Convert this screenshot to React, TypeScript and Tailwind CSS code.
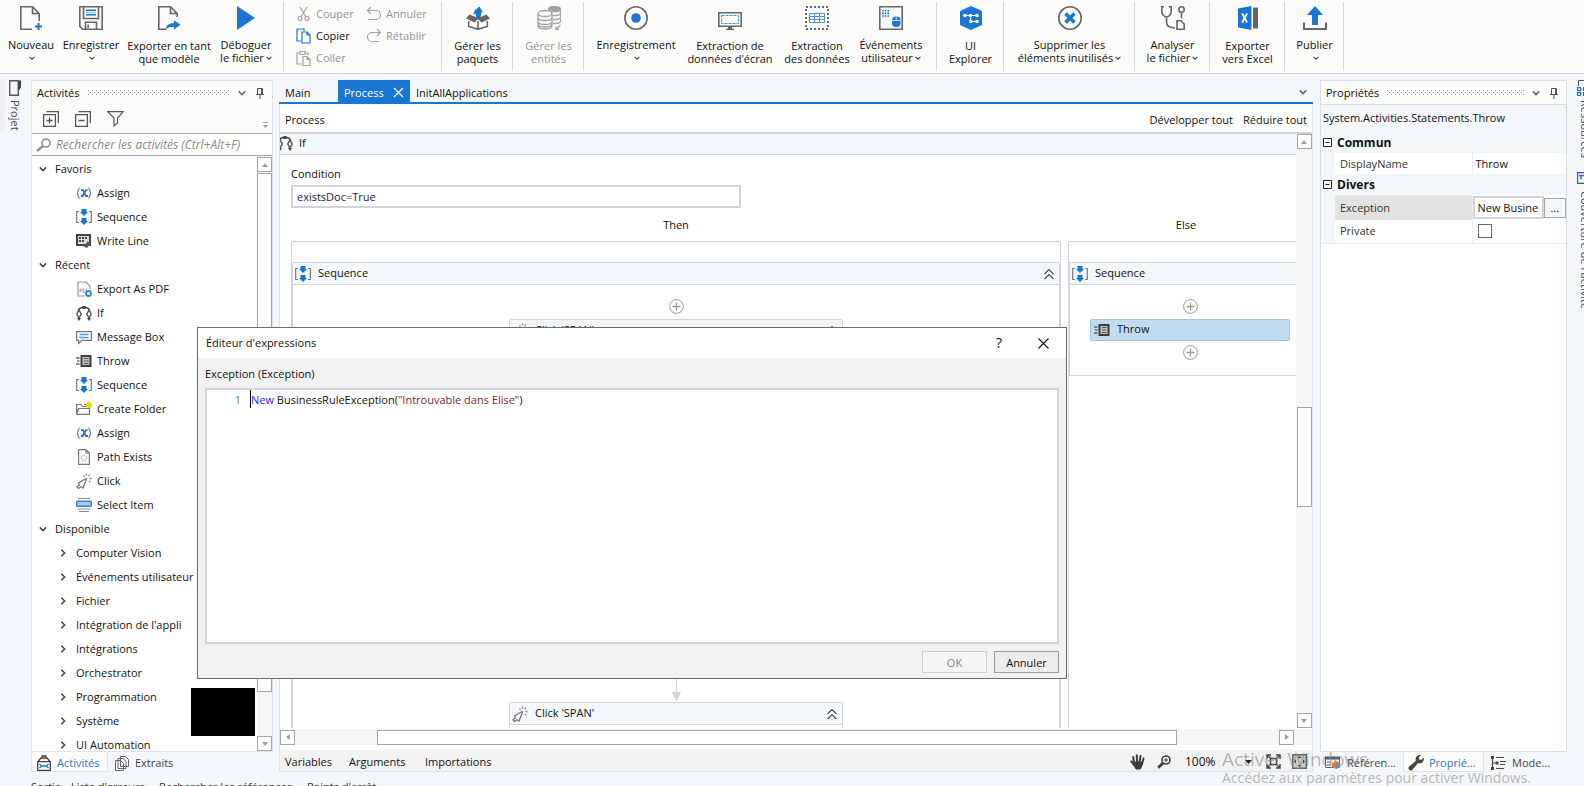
import type { ReactNode } from 'react';

const GRAY = '#666666';
const BLUE = '#1976d2';

/* ---------- small shared glyphs ---------- */

function Chevron({ className = '', dir = 'down', size = 8, color = '#444', stroke = 1.5 }: { className?: string; dir?: 'down' | 'right'; size?: number; color?: string; stroke?: number }) {
  return (
    <svg className={className} width={size} height={size} viewBox="0 0 8 8" fill="none" stroke={color} strokeWidth={stroke} aria-hidden="true">
      <path d={dir === 'down' ? 'M0.8 2.4 4 5.6 7.2 2.4' : 'M2.4 0.8 5.6 4 2.4 7.2'} />
    </svg>
  );
}

function DoubleChevron() {
  return (
    <svg width="12" height="12" viewBox="0 0 12 12" fill="none" stroke="#4a4a55" strokeWidth="1.2" aria-hidden="true">
      <path d="M1.5 6 6 1.5 10.5 6M1.5 11 6 6.500 10.5 11" />
    </svg>
  );
}

function Pin() {
  return (
    <svg width="10" height="12" viewBox="0 0 10 12" fill="none" stroke="#555" aria-hidden="true">
      <path d="M2.500 7V1.500h5V7M1 7.500h8M5 8v4M6.500 1.500V7" />
    </svg>
  );
}

function Grip({ id }: { id: string }) {
  return (
    <svg className="h-[5px] min-w-0 flex-1" aria-hidden="true" shapeRendering="crispEdges">
      <defs>
        <pattern id={id} width="4" height="4" patternUnits="userSpaceOnUse">
          <rect width="1" height="1" fill="#9c9c9c" />
          <rect x="2" y="2" width="1" height="1" fill="#9c9c9c" />
        </pattern>
      </defs>
      <rect width="100%" height="5" fill={`url(#${id})`} />
    </svg>
  );
}

function Plus() {
  return (
    <button type="button" aria-label="Ajouter une activité" className="block h-[15px] w-[15px]">
      <svg width="15" height="15" viewBox="0 0 15 15" fill="none" stroke="#999" aria-hidden="true">
        <circle cx="7.5" cy="7.5" r="6.900" />
        <path d="M7.500 3.500v8M3.500 7.500h8" strokeWidth="1.300" />
      </svg>
    </button>
  );
}

function ScrollButton({ dir }: { dir: 'up' | 'down' | 'left' | 'right' }) {
  const paths = { up: 'M1 6h6L4 2z', down: 'M1 2h6L4 6z', left: 'M6 1v6L2 4z', right: 'M2 1v6l4-3z' };
  return (
    <button type="button" aria-label={`Défiler ${dir}`} className="flex h-[15px] w-[15px] shrink-0 items-center justify-center border border-[#a6a6a6] bg-white">
      <svg width="8" height="8" viewBox="0 0 8 8" fill="#a0a0a0" aria-hidden="true"><path d={paths[dir]} /></svg>
    </button>
  );
}

/* ---------- ribbon icons, 24x24 ---------- */

function RibbonSvg({ children }: { children: ReactNode }) {
  return <svg width="24" height="24" viewBox="0 0 24 24" fill="none" stroke={GRAY} strokeWidth="1.600" aria-hidden="true">{children}</svg>;
}

const ribbonIcons = {
  new: (
    <RibbonSvg>
      <path d="M13 23.200H1.800V.800H13.500L20.200 7.500V15M13.500 1V7.500H20" />
      <path d="M19.500 17v7M16 20.500h7" stroke={BLUE} strokeWidth="2" />
    </RibbonSvg>
  ),
  save: (
    <RibbonSvg>
      <path d="M.800.800H23.200V23.200H3.500L.800 20.500ZM4.500 1V12.500H19.500V1M6.500 23V16.200H17.500V23M9.200 18.500V22" />
      <path d="M7 4.200h10M7 8.800h10" stroke={BLUE} />
      <path d="M7 6.500h10" stroke="#9cc3ea" />
    </RibbonSvg>
  ),
  export: (
    <RibbonSvg>
      <path d="M9 23.200H1.800V.800H13.500L20.200 7.500V11M13.500 1V7.500H20" />
      <path d="M17 14.200V17c-5 .200-7.500 2-8.500 6.500 3-2.500 5.500-2.500 8.500-2.300V23.500l6.500-4.800z" fill={BLUE} stroke="none" />
    </RibbonSvg>
  ),
  play: (
    <RibbonSvg><path d="M3 0 21 12 3 24z" fill={BLUE} stroke="none" /></RibbonSvg>
  ),
  packages: (
    <RibbonSvg>
      <path d="M2.700 15V20.500L12 23.300 21.300 20.500V15M12 15v8" />
      <path d="M0 12.500 3.500 8.500 12 12 20.500 8.500 24 12.500 15.500 16.500 12 13 8.500 16.500z" fill={GRAY} stroke="none" />
      <path d="M13.500 0.500 17 6.500 15 6.500Q15.500 11 12.500 14 9 11 10 7.500L7 8.500 9 4z" fill={BLUE} stroke="none" />
    </RibbonSvg>
  ),
  entities: (
    <RibbonSvg>
      <g stroke="#a3a3a3" strokeWidth="1.300">
        <ellipse cx="17.500" cy="3" rx="6" ry="2.500" fill="#a3a3a3" />
        <path d="M16 9.500c4 .300 7.500-.700 7.500-2.300V3.500M16 13.500c4 .300 7.500-.700 7.500-2.300M16 17.500c4 .300 7.500-.700 7.500-2.300V8" />
        <ellipse cx="8" cy="7.500" rx="7" ry="3" fill="#fbfbfa" />
        <path d="M1 7.500V20c0 4 14 4 14 0V7.500M1 11.500c0 4 14 4 14 0M1 15.500c0 4 14 4 14 0M1 18c0 4 14 4 14 0" />
        <path d="M23.500 19 19 23.500M19 20.500v3h3" />
      </g>
    </RibbonSvg>
  ),
  record: (
    <RibbonSvg>
      <circle cx="12" cy="12" r="11.200" />
      <circle cx="12" cy="12" r="4.800" fill={BLUE} stroke="none" />
    </RibbonSvg>
  ),
  screen: (
    <RibbonSvg>
      <path d="M.800 6.800H23.200V20.200H.800Z" />
      <path d="M3.500 9.500h17v8h-17z" stroke="#4b93dc" strokeWidth="1" strokeDasharray="3 1" />
      <path d="M10 20h4v3h-4z" fill={GRAY} stroke="none" />
      <path d="M8 23.500h8" />
    </RibbonSvg>
  ),
  table: (
    <RibbonSvg>
      <path d="M1 1H23V23H1Z" strokeWidth="2" strokeDasharray="2 2" />
      <path d="M4.500 7.500h15v9h-15zM4.500 10.500h15M4.500 13.500h15M9.500 7.500v9M14.500 7.500v9" stroke="#4b93dc" strokeWidth="1" />
    </RibbonSvg>
  ),
  events: (
    <RibbonSvg>
      <path d="M.800.800H23.200V23.200H.800Z" />
      <path d="M4 4v8M6.600 4v8M9.200 4v8" stroke={BLUE} strokeWidth="1.600" strokeDasharray="1.600 1" />
      <rect x="13" y="10.500" width="8.500" height="10.500" rx="4" fill={BLUE} stroke="none" />
      <path d="M13 14.500h8.500M17.200 10.500v4" stroke="#fff" strokeWidth=".8" />
    </RibbonSvg>
  ),
  explorer: (
    <RibbonSvg>
      <path d="M12 0 22 4.500Q23 5 23 6V18Q23 19 22 19.500L12 24 2 19.500Q1 19 1 18V6Q1 5 2 4.500Z" fill={BLUE} stroke="none" />
      <path d="M6 9.500H18M11.500 9.500V15.500H18" stroke="#fff" strokeWidth="1.200" />
      <g fill="#fff" stroke="none">
        <circle cx="6" cy="9.500" r="1.800" /><circle cx="11.500" cy="9.500" r="1.800" /><circle cx="18" cy="9.500" r="1.800" />
        <circle cx="12" cy="15.500" r="1.800" /><circle cx="18" cy="15.500" r="1.800" />
      </g>
    </RibbonSvg>
  ),
  remove: (
    <RibbonSvg>
      <circle cx="12" cy="12" r="11.200" />
      <path d="M7.500 7.500 16.500 16.500M16.500 7.500 7.500 16.500" stroke={BLUE} strokeWidth="3.600" />
    </RibbonSvg>
  ),
  analyse: (
    <RibbonSvg>
      <path d="M3 .800H.800V5c0 4 3 6 4.700 6S10.200 9 10.200 5V.800H8M5.500 11v5c0 3.500 3 6 8.500 6M16 23.200V14.800h4l3.200 3.200v5.200z" />
      <circle cx="20.500" cy="3.500" r="2.700" />
      <path d="M20.500 6.200V12" />
    </RibbonSvg>
  ),
  excel: (
    <RibbonSvg>
      <path d="M17 1.500h5v21h-5z" fill={GRAY} stroke="none" />
      <path d="M2 2.500 15.500 0V24L2 21.500z" fill={BLUE} stroke="none" />
      <path d="M6.200 7.500 11 16.500M11 7.500 6.200 16.500" stroke="#fff" strokeWidth="1.800" />
    </RibbonSvg>
  ),
  publish: (
    <RibbonSvg>
      <path d="M12 0 20 9H15V19H9V9H4z" fill={BLUE} stroke="none" />
      <path d="M1 16.500V23H23V16.500" strokeWidth="2" />
    </RibbonSvg>
  ),
};

interface RibbonButtonProps {
  icon: keyof typeof ribbonIcons;
  lines: string[];
  width: string;
  menu?: boolean;
  disabled?: boolean;
}

function RibbonButton({ icon, lines, width, menu = false, disabled = false }: RibbonButtonProps) {
  return (
    <button type="button" disabled={disabled} className={`flex shrink-0 flex-col items-center pt-1.5 leading-[13px] whitespace-nowrap disabled:text-[#949494] ${width}`}>
      {ribbonIcons[icon]}
      <span className={menu ? 'mt-2' : 'mt-[9px]'}>{lines[0]}</span>
      <span className="flex h-[13px] items-center">
        {lines[1]}
        {menu && <Chevron size={6} className="ml-0.5" />}
      </span>
    </button>
  );
}

function RibbonGroup({ children, className = '' }: { children: ReactNode; className?: string }) {
  return <div className={`mt-0.5 flex h-[69px] shrink-0 items-start border-r border-[#d8d6e4] ${className}`}><div className="-mt-0.5 flex">{children}</div></div>;
}

function EditCommand({ label, disabled = false, children }: { label: string; disabled?: boolean; children: ReactNode }) {
  return (
    <button type="button" disabled={disabled} className="flex h-[22px] items-center gap-1 whitespace-nowrap disabled:text-[#949494]">
      <svg width="16" height="16" viewBox="0 0 16 16" fill="none" stroke={disabled ? '#a3a3a3' : BLUE} strokeWidth="1.200" aria-hidden="true">{children}</svg>
      {label}
    </button>
  );
}

function Ribbon() {
  return (
    <header className="flex h-[74px] shrink-0 overflow-hidden border-b border-[#d8d6e4] bg-[#fbfbfa]">
      <RibbonGroup className="w-[284px]">
        <RibbonButton icon="new" lines={['Nouveau']} menu width="w-[62px]" />
        <RibbonButton icon="save" lines={['Enregistrer']} menu width="w-[58px]" />
        <RibbonButton icon="export" lines={['Exporter en tant', 'que modèle']} width="w-[98px]" />
        <RibbonButton icon="play" lines={['Déboguer', 'le fichier']} menu width="w-[56px]" />
      </RibbonGroup>
      <RibbonGroup className="w-[158px] pl-3">
        <div className="mt-[3px] w-[70px]">
          <EditCommand label="Couper" disabled>
            <path d="M4 1 10 11M11 1 5 11" /><circle cx="4" cy="12.500" r="2" /><circle cx="11" cy="12.500" r="2" />
          </EditCommand>
          <EditCommand label="Copier">
            <path d="M5 13H1V1H8V3" /><path d="M6 4h5l3 3v8H6zM11 4v3h3" fill="#fff" />
          </EditCommand>
          <EditCommand label="Coller" disabled>
            <path d="M6 14H1V3H3M9 3h3v2M4 1.500h5v3H4z" /><path d="M7 6.500h4l3 3v6H7zM11 6.500v3h3" />
          </EditCommand>
        </div>
        <div className="mt-[3px]">
          <EditCommand label="Annuler" disabled>
            <path d="M5 1 1.500 4.500 5 8M1.500 4.500H10a4.500 4.500 0 0 1 0 9H2" />
          </EditCommand>
          <EditCommand label="Rétablir" disabled>
            <path d="M11 1 14.500 4.500 11 8M14.500 4.500H6a4.500 4.500 0 0 0 0 9H13" />
          </EditCommand>
        </div>
      </RibbonGroup>
      <RibbonGroup className="w-[71px]"><RibbonButton icon="packages" lines={['Gérer les', 'paquets']} width="w-[71px]" /></RibbonGroup>
      <RibbonGroup className="w-[71px]"><RibbonButton icon="entities" lines={['Gérer les', 'entités']} disabled width="w-[71px]" /></RibbonGroup>
      <RibbonGroup className="w-[353px] pl-1.5">
        <RibbonButton icon="record" lines={['Enregistrement']} menu width="w-[92px]" />
        <RibbonButton icon="screen" lines={['Extraction de', "données d'écran"]} width="w-[96px]" />
        <RibbonButton icon="table" lines={['Extraction', 'des données']} width="w-[78px]" />
        <RibbonButton icon="events" lines={['Événements', 'utilisateur']} menu width="w-[70px]" />
      </RibbonGroup>
      <RibbonGroup className="w-[67px]"><RibbonButton icon="explorer" lines={['UI', 'Explorer']} width="w-[67px]" /></RibbonGroup>
      <RibbonGroup className="w-[131px]"><RibbonButton icon="remove" lines={['Supprimer les', 'éléments inutilisés']} menu width="w-[131px]" /></RibbonGroup>
      <RibbonGroup className="w-[75px]"><RibbonButton icon="analyse" lines={['Analyser', 'le fichier']} menu width="w-[75px]" /></RibbonGroup>
      <RibbonGroup className="w-[75px]"><RibbonButton icon="excel" lines={['Exporter', 'vers Excel']} width="w-[75px]" /></RibbonGroup>
      <RibbonGroup className="w-[59px]"><RibbonButton icon="publish" lines={['Publier']} menu width="w-[59px]" /></RibbonGroup>
    </header>
  );
}

/* ---------- activity icons, 16x16 ---------- */

function ActivityIcon({ name }: { name: string }) {
  const body: Record<string, ReactNode> = {
    assign: (
      <>
        <path d="M3.500 2.500Q-.5 8 3.500 13.500M12.500 2.500Q16.500 8 12.500 13.500" stroke="#777" strokeWidth="1.200" />
        <path d="M5 5.200h2L10 11h2M11.500 5.200H10L6.500 11H5" stroke={BLUE} strokeWidth="1.800" />
      </>
    ),
    sequence: (
      <>
        <path d="M3 2.500H.7v11H3M13 2.500h2.300v11H13" stroke="#777" strokeWidth="1.200" />
        <path d="M5.500 0h5v3h1.500L8 7 4 3h1.500zM5.500 9h5v3h1.500l-4 4-4-4h1.500z" fill={BLUE} />
      </>
    ),
    writeline: (
      <>
        <path d="M1 2h13v10H1z" fill="#ddd" stroke="#444" strokeWidth="2" />
        <path d="M3 5h2M6 5h2M9 5h2M3 8h2M6 8h2" stroke="#444" strokeWidth="1.800" />
        <path d="m7.500 13.500 4-5 3.500 1.500-4 5z" fill="#555" />
      </>
    ),
    pdf: (
      <>
        <path d="M14 8V5L10 1H2v14h7" stroke="#999" strokeWidth="1.200" />
        <path d="M4 11.500V8h1.500v2H4M7 8v3.500h1V8zM10 11.500V8h1.500" stroke="#aaa" />
        <circle cx="12.500" cy="12.500" r="2.500" stroke="#2b86cc" strokeWidth="1.800" />
      </>
    ),
    if: (
      <>
        <path d="M2.500 6Q3 2.500 7 2.500H9Q13 2.500 13.500 6M8 1v3" stroke="#444" strokeWidth="1.500" />
        <path d="M3 5 5.200 9 3 13 .8 9zM13 5l2.200 4L13 13l-2.200-4z" stroke="#555" strokeWidth="1.500" />
        <path d="M1 13h4l-2 3zM11 13h4l-2 3zM6.500 1h3v3h-3z" fill="#444" />
      </>
    ),
    message: (
      <>
        <path d="M.6 2.600h14.800v8.800H6L2.600 14.500v-3.100H.6z" stroke="#777" strokeWidth="1.200" />
        <path d="M3.500 5.500h9M3.500 8.500h9" stroke="#4b93dc" strokeWidth="1.400" />
      </>
    ),
    throw: (
      <>
        <path d="M0 5h3.500M1 8h2.500M0 11h3.500" stroke="#666" strokeWidth="1.500" />
        <path d="M5.500 3h9v10h-9z" fill="#c4c4c4" stroke="#3c3c3c" strokeWidth="2" />
        <path d="M8 5.500h4.500M8 8h4.500M8 10.500h4.500" stroke="#555" strokeWidth="1.200" />
      </>
    ),
    folder: (
      <>
        <path d="M.6 13.400V3.500H5l1.500 2h7v7.900zM.6 13.400 2.500 7.500h11" stroke="#777" strokeWidth="1.200" />
        <path d="M8 3.500h3" stroke="#777" />
        <circle cx="13" cy="4" r="3" fill="#fdd800" />
      </>
    ),
    path: (
      <>
        <path d="M2.600.6H10L13.400 4v11.400H2.600zM10 1v3h3" stroke="#777" strokeWidth="1.200" />
        <circle cx="8" cy="9" r="2.800" stroke="#999" strokeDasharray="1.500 1" />
      </>
    ),
    click: (
      <>
        <path d="M10 5.500 2.500 10l1 1.800-2.500 2 1.500 1.700 2.500-1.700 2 1.200 3.500-9z" stroke="#777" strokeWidth="1.300" />
        <path d="M7.500 2.500 8.500 4M10.500.5v2M13.800 1.500l-1.200 1.800M15.500 5.500h-2M12.800 8l1.700 1" stroke="#888" strokeWidth="1.300" />
      </>
    ),
    select: (
      <>
        <path d="M2 1.500h12M2 12h12M3 14.500h10" stroke="#888" strokeWidth="1.200" />
        <rect x=".7" y="4.200" width="14.600" height="5" rx="1" fill="#b4c7dc" stroke="#2f7fe0" strokeWidth="1.400" />
      </>
    ),
  };
  return <svg className="shrink-0" width="16" height="16" viewBox="0 0 16 16" fill="none" aria-hidden="true">{body[name]}</svg>;
}

const favorites = [['assign', 'Assign'], ['sequence', 'Sequence'], ['writeline', 'Write Line']];

const recents = [
  ['pdf', 'Export As PDF'],
  ['if', 'If'],
  ['message', 'Message Box'],
  ['throw', 'Throw'],
  ['sequence', 'Sequence'],
  ['folder', 'Create Folder'],
  ['assign', 'Assign'],
  ['path', 'Path Exists'],
  ['click', 'Click'],
  ['select', 'Select Item'],
];

const available = ['Computer Vision', 'Événements utilisateur', 'Fichier', "Intégration de l'appli", 'Intégrations', 'Orchestrator', 'Programmation', 'Système', 'UI Automation'];

function TreeGroup({ title, children }: { title: string; children: ReactNode }) {
  return (
    <li>
      <button type="button" className="flex h-6 items-center gap-2 pl-[7px]">
        <Chevron />
        {title}
      </button>
      <ul>{children}</ul>
    </li>
  );
}

function ActivityRow({ icon, label }: { icon: string; label: string }) {
  return (
    <li>
      <button type="button" className="flex h-6 items-center gap-[5px] pl-11">
        <ActivityIcon name={icon} />
        {label}
      </button>
    </li>
  );
}

function PanelTitle({ title, id }: { title: string; id: string }) {
  return (
    <div className="flex h-[23px] shrink-0 items-center pr-[7px] pl-[5px]">
      <h2 className="mr-2 whitespace-nowrap">{title}</h2>
      <Grip id={id} />
      <button type="button" aria-label="Options" className="ml-2"><Chevron color="#666" /></button>
      <button type="button" aria-label="Épingler" className="ml-[9px]"><Pin /></button>
    </div>
  );
}

function ActivitiesPanel() {
  return (
    <aside className="flex w-[242px] shrink-0 flex-col pt-1.5">
      <div className="flex min-h-0 flex-1 flex-col border border-[#dde2ea] bg-white">
        <div className="bg-[#fbfbfa]">
          <PanelTitle title="Activités" id="grip-activities" />
          <div className="flex h-[30px] items-center gap-4 border-b border-[#a6a6a6] pl-[11px]">
            <button type="button" aria-label="Tout développer">
              <svg width="16" height="16" viewBox="0 0 16 16" fill="none" stroke="#555" strokeWidth="1.300" aria-hidden="true"><path d="M.6 3.600h11.800v11.800H.6zM3.500.600h11.900V12M6.500 6.500v6M3.500 9.500h6" /></svg>
            </button>
            <button type="button" aria-label="Tout réduire">
              <svg width="16" height="16" viewBox="0 0 16 16" fill="none" stroke="#555" strokeWidth="1.300" aria-hidden="true"><path d="M.6 3.600h11.800v11.800H.6zM3.500.600h11.900V12M3.500 9.500h6" /></svg>
            </button>
            <button type="button" aria-label="Filtrer">
              <svg width="17" height="16" viewBox="0 0 17 16" fill="none" stroke="#555" strokeWidth="1.200" aria-hidden="true"><path d="M.8.600h15.400L10.500 7v5L7 15V7z" /></svg>
            </button>
            <svg className="mr-1 ml-auto self-end pb-1" width="5" height="12" viewBox="0 0 5 8" fill="#999" aria-hidden="true"><path d="M0 1h5v1H0zM0 4h5L2.500 7z" /></svg>
          </div>
          <label className="flex h-[22px] items-center border-b border-[#a6a6a6] bg-white pt-px pl-1">
            <svg width="15" height="14" viewBox="0 0 15 14" fill="none" stroke="#8f8f8f" aria-hidden="true"><circle cx="10" cy="5" r="4" strokeWidth="1.600" /><path d="M7 8 1 13" strokeWidth="2.400" /></svg>
            <input type="search" aria-label="Rechercher les activités" placeholder="Rechercher les activités (Ctrl+Alt+F)" className="ml-[5px] min-w-0 flex-1 bg-transparent text-[12px] italic outline-none placeholder:text-[#8a8a8a]" />
          </label>
        </div>
        <div className="flex min-h-0 flex-1 pt-px">
          <ul className="relative min-w-0 flex-1 overflow-hidden whitespace-nowrap">
            <TreeGroup title="Favoris">
              {favorites.map(([icon, label]) => <ActivityRow key={label} icon={icon} label={label} />)}
            </TreeGroup>
            <TreeGroup title="Récent">
              {recents.map(([icon, label]) => <ActivityRow key={label} icon={icon} label={label} />)}
            </TreeGroup>
            <TreeGroup title="Disponible">
              {available.map((label) => (
                <li key={label}>
                  <button type="button" className="flex h-6 items-center gap-[9px] pl-[27px]">
                    <Chevron dir="right" />
                    {label}
                  </button>
                </li>
              ))}
            </TreeGroup>
          </ul>
          <div className="flex w-[15px] shrink-0 flex-col bg-[#f6f6f5]">
            <ScrollButton dir="up" />
            <div className="mt-px mb-11 flex-1 border border-[#a6a6a6] bg-white" />
            <ScrollButton dir="down" />
          </div>
        </div>
      </div>
      <div className="flex h-5 shrink-0">
        <button type="button" className="flex w-[77px] items-center gap-1.5 border-r border-b border-l border-[#dde2ea] bg-[#fbfbfa] pt-0.5 pl-[5px] text-[#2a78c8]">
          <svg width="14" height="16" viewBox="0 0 14 16" fill="none" stroke="#444" strokeWidth="1.300" aria-hidden="true"><path d="M.7 6.700h12.600v8.600H.7zM1 6.500 4 3h6l3 3.500M5 3V1h4v2" /><path d="M2.500 9l2 2-2 2M11.500 9l-2 2 2 2M4.500 11h5" stroke={BLUE} /></svg>
          Activités
        </button>
        <button type="button" className="flex items-center gap-1.5 pt-0.5 pl-[7px] text-[#444]">
          <svg width="14" height="15" viewBox="0 0 14 15" fill="#f4f7f9" stroke="#666" aria-hidden="true"><path d="M5.500.500h5l3 3v7h-8zM3 2.500h5l3 3v7H3zM.5 4.500h5l3 3v7h-8z" /></svg>
          Extraits
        </button>
      </div>
    </aside>
  );
}

/* ---------- workflow designer ---------- */

function CardHeader({ icon, title, collapsible = false }: { icon: string; title: string; collapsible?: boolean }) {
  return (
    <div className="flex h-[22px] shrink-0 items-center gap-[7px] border-b border-[#d3d3de] bg-[#f4f7f9] pr-1 pl-0.5">
      <ActivityIcon name={icon} />
      <span className="-mt-0.5">{title}</span>
      {collapsible && <button type="button" aria-label="Réduire" className="ml-auto"><DoubleChevron /></button>}
    </div>
  );
}

function Canvas() {
  return (
    <div className="flex min-h-0 min-w-0 flex-1 flex-col overflow-hidden bg-white whitespace-nowrap">
      <div className="-ml-[3px] flex h-[21px] shrink-0 items-center gap-1.5 border-b border-[#d3d3de] bg-[#f4f7f9] pb-0.5">
        <ActivityIcon name="if" />
        If
      </div>
      <div className="flex min-h-0 flex-1 flex-col pt-[11px] pl-[11px]">
        <label htmlFor="condition" className="leading-4">Condition</label>
        <input id="condition" defaultValue="existsDoc=True" className="mt-[3px] h-[23px] w-[450px] shrink-0 border-2 border-[#d3d3de] bg-white px-1 text-[#1c2340] outline-none" />
        <div className="mt-[9px] flex min-h-0 flex-1 gap-[7px]">
          <section className="flex w-[770px] shrink-0 flex-col">
            <h3 className="text-center leading-4">Then</h3>
            <div className="mt-2 flex min-h-0 flex-1 flex-col rounded-t-xs border border-b-0 border-[#d3d3de] pt-5">
              <div className="flex min-h-0 flex-1 flex-col rounded-t-xs border border-b-0 border-[#d3d3de]">
                <CardHeader icon="sequence" title="Sequence" collapsible />
                <div className="flex min-h-0 flex-1 flex-col items-center">
                  <div className="mt-[14px]"><Plus /></div>
                  <div className="mt-[5px] flex min-h-0 w-[334px] flex-1 flex-col rounded-xs border border-[#d3d3de]">
                    <CardHeader icon="click" title="Click 'SPAN'" collapsible />
                  </div>
                  <svg className="shrink-0" width="9" height="30" viewBox="0 0 9 30" fill="#d3d3de" aria-hidden="true"><path d="M4 0h1v20h4L4.500 30 0 20h4z" /></svg>
                  <div className="flex h-[26px] w-[334px] shrink-0 flex-col rounded-t-xs border border-b-0 border-[#d3d3de]">
                    <CardHeader icon="click" title="Click 'SPAN'" collapsible />
                  </div>
                </div>
              </div>
            </div>
          </section>
          <section className="flex w-[236px] shrink-0 flex-col">
            <h3 className="text-center leading-4">Else</h3>
            <div className="mt-2 flex min-h-0 flex-1 flex-col rounded-t-xs border border-b-0 border-[#d3d3de] pt-5">
              <div className="flex h-[114px] w-[242px] shrink-0 flex-col border border-[#d3d3de]">
                <CardHeader icon="sequence" title="Sequence" />
                <div className="flex flex-1 flex-col items-center">
                  <div className="mt-[14px]"><Plus /></div>
                  <button type="button" className="mt-[5px] flex h-[22px] w-[200px] items-center gap-[7px] rounded-xs border border-[#a3c6de] bg-[#c1dcef] px-[3px]">
                    <ActivityIcon name="throw" />
                    <span className="-mt-0.5">Throw</span>
                  </button>
                  <div className="mt-1"><Plus /></div>
                </div>
              </div>
            </div>
          </section>
        </div>
      </div>
    </div>
  );
}

function DesignerFooter() {
  return (
    <div className="mt-[5px] flex h-[22px] shrink-0 items-center border-b border-[#dde2ea] bg-[#f2f2f2] pt-0.5 pl-[5px]">
      <button type="button" className="w-16 text-left">Variables</button>
      <button type="button" className="w-[76px] text-left">Arguments</button>
      <button type="button">Importations</button>
      <div className="ml-auto flex items-center pr-[5px]">
        <button type="button" aria-label="Panoramique">
          <svg width="15" height="16" viewBox="0 0 15 16" fill="none" stroke="#3c3c3c" strokeWidth="2" strokeLinecap="round" aria-hidden="true"><path d="M4 9 3.200 3M7 8 6.800 1.200M9.500 8.500 10.500 2M12 10l1.500-5.500M4.500 11 1.200 7.500" /><path d="M4 8h8.500v2l-2 5H6l-2.500-4z" fill="#3c3c3c" strokeWidth="1" /></svg>
        </button>
        <button type="button" aria-label="Zoom" className="ml-3">
          <svg width="14" height="14" viewBox="0 0 14 14" fill="none" stroke="#3c3c3c" aria-hidden="true"><circle cx="9" cy="5" r="4" strokeWidth="1.600" /><path d="M6 8 1.200 12.800" strokeWidth="2.800" /><path d="M9 3v4M7 5h4" /></svg>
        </button>
        <label className="relative ml-[14px] flex w-[73px] items-center">
          <select aria-label="Niveau de zoom" className="w-full appearance-none bg-transparent px-0 text-[12px] outline-none">
            <option>100%</option>
          </select>
          <svg className="absolute right-1.5" width="7" height="4" viewBox="0 0 7 4" aria-hidden="true"><path d="M0 0h7L3.500 4z" fill="#222" /></svg>
        </label>
        <button type="button" aria-label="Ajuster à l'écran" className="ml-2">
          <svg width="15" height="15" viewBox="0 0 15 15" fill="none" stroke="#444" strokeWidth="1.500" aria-hidden="true"><path d="M4.500 4.500h6v6h-6zM1 5V1h4M10 1h4v4M14 10v4h-4M5 14H1v-4M1 1l3.500 3.500M14 1l-3.500 3.500M14 14l-3.500-3.500M1 14l3.500-3.500" /></svg>
        </button>
        <button type="button" aria-label="Vue d'ensemble" className="ml-[11px]">
          <svg width="15" height="15" viewBox="0 0 15 15" fill="#c9c9c9" stroke="#666" strokeWidth="1.400" aria-hidden="true"><path d="M.7.700h13.600v13.600H.7z" /><path d="M5.500 4 7.500 2l2 2zM5.500 11l2 2 2-2zM4 5.500 2 7.500l2 2zM11 5.500l2 2-2 2z" fill="#444" stroke="none" /></svg>
        </button>
      </div>
    </div>
  );
}

function Designer() {
  return (
    <main className="ml-1.5 flex min-w-0 flex-1 flex-col pt-1.5">
      <div className="flex h-6 shrink-0 items-stretch border-b-2 border-[#1976d2] whitespace-nowrap">
        <button type="button" className="w-[59px] pt-[3px] pl-1.5 text-left">Main</button>
        <button type="button" className="flex w-[72px] items-center justify-between bg-[#1976d2] pt-[3px] pr-1.5 pl-1.5 text-white">
          Process
          <svg width="11" height="11" viewBox="0 0 11 11" stroke="#fff" strokeWidth="1.200" aria-hidden="true"><path d="M1 1l9 9M10 1l-9 9" /></svg>
        </button>
        <button type="button" className="pt-[3px] pl-1.5">InitAllApplications</button>
        <button type="button" aria-label="Documents ouverts" className="mr-1.5 ml-auto pt-0.5"><Chevron color="#666" /></button>
      </div>
      <div className="flex min-h-0 flex-1 flex-col border-x border-[#dde2ea] bg-white">
        <div className="flex h-[30px] shrink-0 items-center justify-between border-b-2 border-[#d3d3de] pt-[3px] pr-[5px] pl-[5px]">
          <span>Process</span>
          <div className="flex gap-2.5">
            <button type="button">Développer tout</button>
            <button type="button">Réduire tout</button>
          </div>
        </div>
        <div className="flex min-h-0 flex-1">
          <Canvas />
          <div className="flex w-4 shrink-0 flex-col items-center bg-[#f6f6f5]">
            <ScrollButton dir="up" />
            <div className="flex-[258]" />
            <div className="h-[100px] w-[15px] border border-[#a6a6a6] bg-white" />
            <div className="flex-[206]" />
            <ScrollButton dir="down" />
          </div>
        </div>
        <div className="mt-px flex h-4 shrink-0 items-center bg-[#f6f6f5] pr-[18px]">
          <ScrollButton dir="left" />
          <div className="flex-[82]" />
          <div className="h-[15px] flex-[800] border border-[#a6a6a6] bg-white" />
          <div className="flex-[102]" />
          <ScrollButton dir="right" />
        </div>
        <DesignerFooter />
      </div>
    </main>
  );
}

/* ---------- properties ---------- */

function CategoryRow({ title }: { title: string }) {
  return (
    <tr className="h-[21px] bg-[#f4f7f9]">
      <th scope="rowgroup" colSpan={3} className="text-left text-[12px] font-bold">
        <button type="button" className="flex items-center gap-[5px] pl-0.5">
          <svg width="9" height="9" viewBox="0 0 9 9" fill="#fff" stroke="#222" aria-hidden="true"><path d="M.5.500h8v8h-8zM2.500 4.500h4" /></svg>
          {title}
        </button>
      </th>
    </tr>
  );
}

function PropertiesPanel() {
  return (
    <aside className="ml-[7px] flex w-[247px] shrink-0 flex-col pt-1.5">
      <div className="flex min-h-0 flex-1 flex-col border border-[#d9dde4] bg-white">
        <div className="border-b border-[#d9dde4] bg-[#fbfbfa]"><PanelTitle title="Propriétés" id="grip-properties" /></div>
        <p className="flex h-[27px] shrink-0 items-center bg-[#f4f7f9] pb-px pl-0.5">System.Activities.Statements.Throw</p>
        <table className="w-full table-fixed border-collapse whitespace-nowrap">
          <colgroup>
            <col className="w-3.5" />
            <col className="w-[137px]" />
            <col />
          </colgroup>
          <tbody>
            <CategoryRow title="Commun" />
            <tr className="h-[21px]">
              <td className="bg-[#f4f7f9]" />
              <th scope="row" className="border-r border-[#eceff2] pl-[5px] text-left font-normal text-[#333]">DisplayName</th>
              <td className="pl-[3px]">Throw</td>
            </tr>
            <CategoryRow title="Divers" />
            <tr className="h-[25px]">
              <td className="bg-[#f4f7f9]" />
              <th scope="row" className="border-r border-[#eceff2] bg-[#e2e2e1] pl-[5px] text-left font-normal text-[#333]">Exception</th>
              <td>
                <div className="flex items-center">
                  <input aria-label="Exception" defaultValue="New BusinessRuleException" className="h-[23px] w-[71px] border-2 border-[#d3d3de] bg-white px-[3px] outline-none" />
                  <button type="button" className="h-5 flex-1 border border-[#a6a6a6] bg-[#f4f7f9] leading-4">...</button>
                </div>
              </td>
            </tr>
            <tr className="h-[23px] border-b border-[#eceff2]">
              <td className="bg-[#f4f7f9]" />
              <th scope="row" className="border-r border-[#eceff2] pl-[5px] text-left font-normal text-[#333]"><label htmlFor="private">Private</label></th>
              <td className="pl-[5px]">
                <input id="private" type="checkbox" className="block h-3.5 w-3.5 appearance-none border border-[#666] bg-white" />
              </td>
            </tr>
          </tbody>
        </table>
      </div>
      <div className="flex h-5 shrink-0 text-[#444] whitespace-nowrap">
        <button type="button" className="flex w-[83px] items-center gap-1.5 pt-0.5 pl-[5px]">
          <svg width="16" height="14" viewBox="0 0 16 14" fill="none" stroke="#666" aria-hidden="true"><path d="M.5 1.500h14v10H.5z" /><path d="M0 2h15" strokeWidth="3" stroke="#555" /><path d="M2 6h4M2 9h4" /><path d="m11 5 4 2v4l-4 2-4-2V7z" fill="#e8763a" stroke="none" /><path d="m11 9 4-2v4l-4 2z" fill="#3b9ad9" stroke="none" /></svg>
          Référen...
        </button>
        <button type="button" className="flex w-[81px] items-center gap-[5px] border-r border-b border-l border-[#dde2ea] bg-[#fbfbfa] pt-0.5 pl-1 text-[#2a78c8]">
          <svg width="16" height="16" viewBox="0 0 16 16" fill="#4a4432" aria-hidden="true"><path d="M10 .5c1-.5 2-.6 3-.3L10.800 2.600l.4 2 2 .4 2.400-2.200c.8 2.800-1 5.400-3.800 5.500-.8 0-1.300-.1-1.800-.3L4.500 14.800a2.200 2.200 0 0 1-3.300-3.200L7.800 6C7.200 3.600 8 1.400 10 .5z" /></svg>
          Proprié...
        </button>
        <button type="button" className="flex items-center gap-[5px] pt-0.5 pl-[7px]">
          <svg width="16" height="14" viewBox="0 0 16 14" stroke="#4a4432" fill="#4a4432" aria-hidden="true"><path d="M0 0h3v3H0zM0 11h3v3H0zM4.500 5.500h3v3h-3z" stroke="none" /><path d="M5 1.500h8M9 5.500h6M9 8.500h5M5 12.500h8M1.500 3v8M1.500 7h3" strokeWidth="1.200" /></svg>
          Mode...
        </button>
      </div>
    </aside>
  );
}

/* ---------- expression editor window ---------- */

function ExpressionEditor() {
  return (
    <div role="dialog" aria-labelledby="editor-title" className="absolute top-[327px] left-[197px] flex h-[352px] w-[870px] flex-col border border-[#6b6b6b] bg-[#f2f2f2]">
      <div className="flex h-[30px] shrink-0 items-center bg-white pl-2">
        <h2 id="editor-title">Éditeur d'expressions</h2>
        <button type="button" aria-label="Aide" className="mr-9 ml-auto text-sm">?</button>
        <button type="button" aria-label="Fermer" className="mr-[17px]">
          <svg width="11" height="11" viewBox="0 0 11 11" stroke="#111" strokeWidth="1.100" aria-hidden="true"><path d="M.5.500l10 10M10.500.500l-10 10" /></svg>
        </button>
      </div>
      <p id="editor-label" className="mt-2 ml-[7px] h-[22px] leading-4">Exception (Exception)</p>
      <div className="mr-[7px] ml-[7px] flex min-h-0 flex-1 border-2 border-[#d3d3de] bg-white">
        <span className="w-[34px] pt-0.5 text-right leading-4 text-[#4f90a6]">1</span>
        <div role="textbox" aria-labelledby="editor-label" contentEditable suppressContentEditableWarning className="ml-[9px] flex-1 outline-none">
          <span className="inline-block h-[18px] border-l border-black pt-0.5 leading-4">
            <span className="text-[#2a22d8]">New</span> BusinessRuleException(<span className="text-[#7a1f28]">"Introuvable dans Elise"</span>)
          </span>
        </div>
      </div>
      <div className="flex h-[34px] shrink-0 items-start justify-end gap-[7px] pt-[7px] pr-[7px]">
        <button type="button" disabled className="h-[22px] w-[65px] border border-[#cfcfcf] bg-[#f5f5f5] pt-px disabled:text-[#838383]">OK</button>
        <button type="button" className="h-[22px] w-[65px] border border-[#9c9c9c] bg-[#ececec] pt-px">Annuler</button>
      </div>
    </div>
  );
}

export default function App() {
  return (
    <div className="relative flex h-screen flex-col overflow-hidden bg-[#f4f7f9] font-['Open_Sans','Noto_Sans',sans-serif] text-[11px] leading-4 text-[#111]">
      <Ribbon />
      <div className="flex min-h-0 flex-1">
        <nav className="flex w-[31px] shrink-0 pt-1.5">
          <div className="h-[51px] w-[5px] bg-[#f0edf3]" />
          <button type="button" className="flex h-[51px] w-5 flex-col items-center gap-1 text-[#4c4658]">
            <svg className="shrink-0" width="12" height="16" viewBox="0 0 12 16" fill="none" stroke="#555" aria-hidden="true"><path d="M.7.700h8.600v14.600H.7z" strokeWidth="1.400" /><path d="M9 .5h3v7l-3 4z" fill="#444" stroke="none" /></svg>
            <span className="[writing-mode:vertical-rl]">Projet</span>
          </button>
        </nav>
        <ActivitiesPanel />
        <Designer />
        <PropertiesPanel />
        <nav className="flex w-[17px] shrink-0 flex-col overflow-hidden pt-1.5 pl-2.5 whitespace-nowrap text-[#4c4658]">
          <button type="button" className="flex h-[92px] w-4 flex-col items-center gap-1">
            <svg className="shrink-0" width="16" height="16" viewBox="0 0 16 16" fill="none" stroke={BLUE} aria-hidden="true"><path d="M1.500 6V.500H15" stroke="#555" /><path d="M.6 7.600h3v3h-3zM.6 12.600h3v3h-3zM6.600 12.600h3v3h-3z" strokeWidth="1.200" /><circle cx="8" cy="9" r="2" fill={BLUE} /></svg>
            <span className="[writing-mode:vertical-rl]">Ressources</span>
          </button>
          <button type="button" className="flex w-4 flex-col items-center gap-[7px]">
            <svg className="shrink-0" width="16" height="12" viewBox="0 0 16 12" fill="none" aria-hidden="true"><path d="M.6.600h14.800v10.800H.6z" stroke="#555" strokeWidth="1.200" /><path d="M2 3.500h12M4 3.500v4M8 3.500v4" stroke={BLUE} strokeWidth="1.500" /></svg>
            <span className="[writing-mode:vertical-rl]">Couverture de l'activité</span>
          </button>
        </nav>
      </div>
      <footer className="flex h-[14px] shrink-0 overflow-hidden pt-[7px] pl-[31px] whitespace-nowrap text-[#333]">
        <button type="button" className="h-4 w-10 shrink-0 text-left">Sortie</button>
        <button type="button" className="h-4 w-[88px] shrink-0 text-left">Liste d'erreurs</button>
        <button type="button" className="h-4 w-[148px] shrink-0 text-left">Rechercher les références</button>
        <button type="button" className="h-4 shrink-0 text-left">Points d'arrêt</button>
      </footer>
      <div className="absolute top-[688px] left-[191px] h-12 w-16 bg-black" />
      <ExpressionEditor />
      <div className="pointer-events-none absolute right-[50px] -bottom-px w-[312px] whitespace-nowrap text-[#8a8a8a]/60">
        <p className="text-[19px] leading-5">Activer Windows</p>
        <p className="text-[14px] leading-[18px]">Accédez aux paramètres pour activer Windows.</p>
      </div>
    </div>
  );
}
